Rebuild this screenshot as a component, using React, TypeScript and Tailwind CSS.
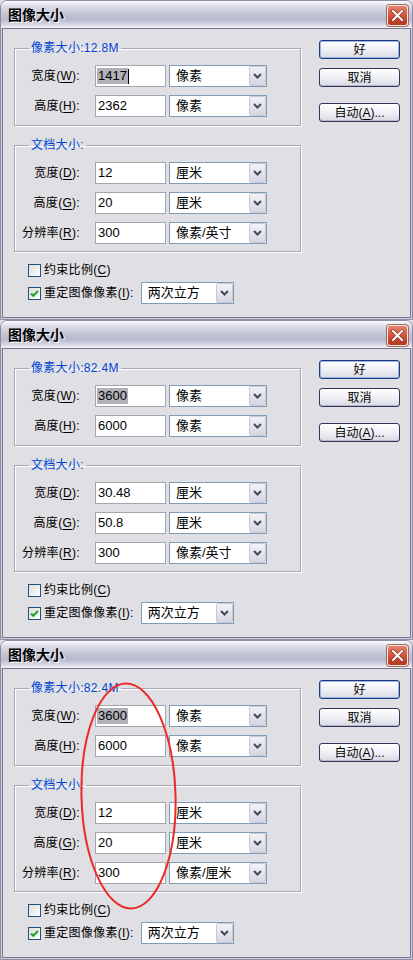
const FONT = "font-['Liberation_Sans','Noto_Sans_CJK_SC',sans-serif]";

interface DialogData {
  pixelSize: string;
  width: string;
  height: string;
  docW: string;
  docH: string;
  res: string;
  resUnit: string;
  circled?: boolean;
}

const dialogs: DialogData[] = [
  { pixelSize: '12.8M', width: '1417', height: '2362', docW: '12', docH: '20', res: '300', resUnit: '像素/英寸' },
  { pixelSize: '82.4M', width: '3600', height: '6000', docW: '30.48', docH: '50.8', res: '300', resUnit: '像素/英寸' },
  { pixelSize: '82.4M', width: '3600', height: '6000', docW: '12', docH: '20', res: '300', resUnit: '像素/厘米', circled: true },
];

export default function App() {
  return (
    <div className={`w-[413px] bg-[#e0dfe3] ${FONT} text-black`}>
      {dialogs.map((d, i) => (
        <ImageSizeDialog key={i} data={d} caret={i === 0} />
      ))}
    </div>
  );
}

function ImageSizeDialog({ data, caret }: { data: DialogData; caret: boolean }) {
  return (
    <div className="relative flex h-[320px] w-[413px] flex-col rounded-t-[7px] border border-[#8d8da6] bg-[#cfcfdd]">
      <div className="flex h-[27px] items-start justify-between rounded-t-[6px] bg-[linear-gradient(to_bottom,#fbfbfd_0%,#dedee9_18%,#c3c3d7_50%,#b8b8cf_68%,#d7d7e3_88%,#f3f3f7_100%)] pr-[4px]">
        <span className="ml-[7px] mt-[5px] text-[14px] font-bold leading-[18px] [text-shadow:1px_1px_0_#ffffff]">图像大小</span>
        <CloseButton />
      </div>

      <div className="mx-[1px] mb-[1px] flex flex-1 border border-[#77778f] bg-[#e0dfe3]">
        <div className="ml-[11px] mt-[11px] flex w-[287px] flex-col">
          <GroupBox title={`像素大小:${data.pixelSize}`} bottomPad="pb-[8px]">
            <FieldRow label="宽度" hot="W" value={data.width} unit="像素" selected caret={caret} />
            <FieldRow label="高度" hot="H" value={data.height} unit="像素" />
          </GroupBox>

          <div className="mt-[11px]">
            <GroupBox title="文档大小:" bottomPad="pb-[7px]">
              <FieldRow label="宽度" hot="D" value={data.docW} unit="厘米" />
              <FieldRow label="高度" hot="G" value={data.docH} unit="厘米" />
              <FieldRow label="分辨率" hot="R" value={data.res} unit={data.resUnit} />
            </GroupBox>
          </div>

          <div className="ml-[14px] mt-[10px] flex h-[16px] items-center">
            <CheckBox />
            <span className="ml-[3px] text-[12px] tracking-[0.3px]">
              约束比例(<span className="underline underline-offset-2">C</span>)
            </span>
          </div>

          <div className="ml-[14px] mt-[4px] flex h-[22px] items-center">
            <CheckBox checked />
            <span className="ml-[3px] text-[12px] tracking-[0.3px]">
              重定图像像素(<span className="underline underline-offset-2">I</span>):
            </span>
            <div className="ml-[7px]">
              <Select text="两次立方" width="w-[93px]" />
            </div>
          </div>
        </div>

        <div className="ml-[18px] mt-[11px] flex w-[81px] flex-col">
          <Button primary>好</Button>
          <div className="mt-[9px]">
            <Button>取消</Button>
          </div>
          <div className="mt-[16px]">
            <Button>
              自动(<span className="underline underline-offset-2">A</span>)...
            </Button>
          </div>
        </div>
      </div>

      {data.circled && (
        <svg className="pointer-events-none absolute left-0 top-0" width="413" height="320">
          <ellipse
            cx="127.5"
            cy="155"
            rx="47"
            ry="112.5"
            transform="rotate(-1.5 127.5 155)"
            fill="none"
            stroke="#ec2a2a"
            strokeWidth="2"
          />
        </svg>
      )}
    </div>
  );
}

function CloseButton() {
  return (
    <span className="mt-[4px] flex h-[21px] w-[21px] items-center justify-center rounded-[3px] border border-[#f4e8e6] bg-[linear-gradient(to_bottom,#e9866d,#cc4a33_60%,#b8371f)] shadow-[0_0_0_1px_#a36a60]">
      <svg width="13" height="13" viewBox="0 0 13 13">
        <path d="M2 2l9 9M11 2l-9 9" stroke="#7a2a1e" strokeWidth="3.2" strokeLinecap="square" />
        <path d="M2 2l9 9M11 2l-9 9" stroke="#ffffff" strokeWidth="2" strokeLinecap="square" />
      </svg>
    </span>
  );
}

function GroupBox({ title, bottomPad, children }: { title: string; bottomPad: string; children: React.ReactNode }) {
  return (
    <fieldset className={`m-0 border border-[#a7a7b6] px-0 ${bottomPad} shadow-[1px_1px_0_#ffffff,inset_1px_1px_0_#ffffff]`}>
      <legend className="ml-[14px] px-[2px] text-[12px] leading-[16px] tracking-[0.3px] text-[#0046d5]">{title}</legend>
      <div className="mt-[9px] flex flex-col gap-[8px]">{children}</div>
    </fieldset>
  );
}

function FieldRow({ label, hot, value, unit, selected, caret }: {
  label: string; hot: string; value: string; unit: string; selected?: boolean; caret?: boolean;
}) {
  return (
    <div className="flex h-[22px] items-center">
      <span className="w-[65px] whitespace-nowrap text-right text-[12px] tracking-[0.3px]">
        {label}(<span className="underline underline-offset-2">{hot}</span>):
      </span>
      <div className="ml-[15px] flex h-[22px] w-[71px] items-center border border-[#a5a5b0] bg-white pl-[1px] text-[13px]">
        <span className={selected ? 'bg-[#b1b1b9] px-[1px] leading-[16px]' : 'px-[1px] leading-[16px]'}>{value}</span>
        {caret && <span className="h-[15px] w-[1px] bg-black" />}
      </div>
      <div className="ml-[3px]">
        <Select text={unit} width="w-[98px]" />
      </div>
    </div>
  );
}

function Select({ text, width }: { text: string; width: string }) {
  return (
    <div className={`flex h-[22px] ${width} items-stretch border border-[#7f9db9] bg-white`}>
      <span className="flex-1 whitespace-nowrap pl-[6px] text-[13px] leading-[20px]">{text}</span>
      <span className="flex w-[17px] items-center justify-center rounded-[2px] border border-[#c9c9d6] bg-[linear-gradient(to_bottom,#f1f1f6,#d6d6e3)]">
        <svg width="9" height="6" viewBox="0 0 9 6">
          <path d="M1 1l3.5 3.5L8 1" stroke="#4a4a52" strokeWidth="2" fill="none" />
        </svg>
      </span>
    </div>
  );
}

function CheckBox({ checked }: { checked?: boolean }) {
  return (
    <span className="flex h-[13px] w-[13px] items-center justify-center border border-[#1c5180] bg-[linear-gradient(135deg,#dcdcd7,#ffffff)]">
      {checked && (
        <svg width="9" height="9" viewBox="0 0 9 9">
          <path d="M1 4.5l2.3 2.3L8 2" stroke="#21a121" strokeWidth="2" fill="none" />
        </svg>
      )}
    </span>
  );
}

function Button({ primary, children }: { primary?: boolean; children: React.ReactNode }) {
  return (
    <div
      className={`flex h-[19px] w-[81px] items-center justify-center rounded-[3px] border text-[12px] ${
        primary
          ? 'border-[#1d3a78] shadow-[inset_0_0_0_1px_#9cb4e8]'
          : 'border-[#34345a] shadow-[inset_0_-1px_0_#b8b8cc]'
      } bg-[linear-gradient(to_bottom,#ffffff,#f0f0f5_50%,#d9d9e5)]`}
    >
      {children}
    </div>
  );
}
